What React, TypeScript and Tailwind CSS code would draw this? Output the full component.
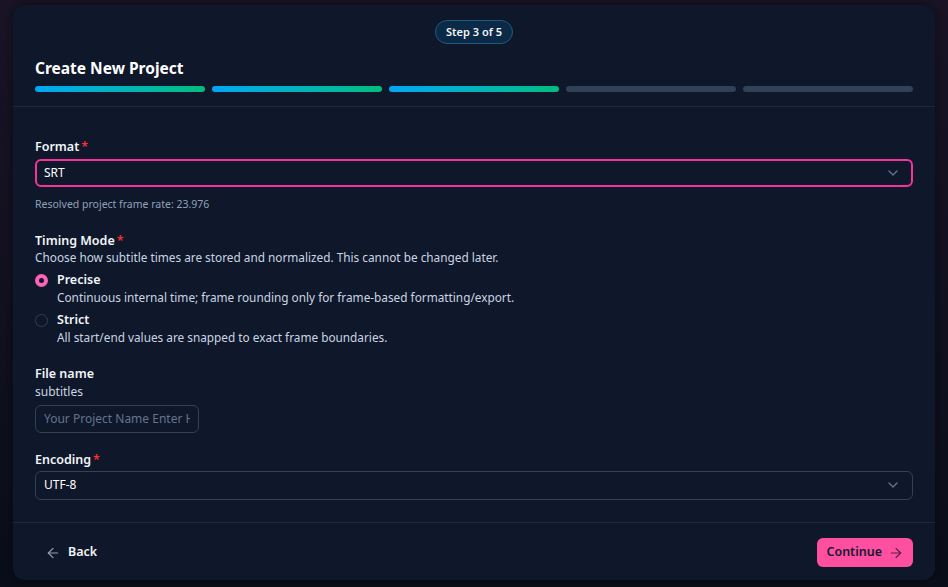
import { ArrowLeft, ArrowRight, ChevronDown } from "lucide-react"

const steps = [true, true, true, false, false]

function Label({ text, required }: { text: string; required?: boolean }) {
  return (
    <div className="text-[12.5px] font-semibold text-slate-100 leading-[17px]">
      {text}
      {required && <span className="ml-0.5 text-red-500">*</span>}
    </div>
  )
}

function Select({ value, active }: { value: string; active?: boolean }) {
  return (
    <div
      className={
        active
          ? "mt-[4px] flex h-[28px] items-center justify-between rounded-md border-2 border-pink-500 bg-[#0f172a] pl-[7px] pr-[10px]"
          : "mt-[3px] flex h-[29px] items-center justify-between rounded-md border border-slate-700 bg-[#0f172a] pl-[8px] pr-[11px]"
      }
    >
      <span className="text-[12px] text-white">{value}</span>
      <ChevronDown className="h-4 w-4 text-slate-500" strokeWidth={2} />
    </div>
  )
}

function Radio({ checked, title, desc }: { checked?: boolean; title: string; desc: string }) {
  return (
    <div className="flex gap-[9px]">
      <div
        className={
          checked
            ? "mt-[3px] h-[13px] w-[13px] shrink-0 rounded-full border-[4px] border-pink-400 bg-[#0f172a]"
            : "mt-[3px] h-[13px] w-[13px] shrink-0 rounded-full border border-slate-700 bg-[#0f172a]"
        }
      />
      <div>
        <div className="text-[12.5px] font-semibold leading-[18px] text-slate-100">{title}</div>
        <div className="text-[11.8px] leading-[17px] text-slate-300">{desc}</div>
      </div>
    </div>
  )
}

export default function App() {
  return (
    <div
      className="h-[587px] w-[948px] overflow-hidden bg-gradient-to-b from-[#1a1426] to-[#0a0e1a] px-[13px] pt-[5px]"
      style={{ fontFamily: '"Noto Sans", "Open Sans", sans-serif' }}
    >
      <div className="flex h-[575px] flex-col rounded-xl bg-[#0f172a] shadow-[0_0_12px_rgba(0,0,0,0.5)]">
        <div className="border-b border-slate-800 px-[22px] pb-[14px] pt-[15px]">
          <div className="flex justify-center">
            <span className="rounded-full border border-[#1d5a82] bg-[#0c2a45] px-[10px] py-[3px] text-[11px] font-semibold leading-[16px] text-slate-100">
              Step 3 of 5
            </span>
          </div>
          <h1 className="mt-[13px] text-[15.5px] font-bold leading-[22px] text-white">Create New Project</h1>
          <div className="mt-[7px] flex gap-[7px]">
            {steps.map((done, i) => (
              <div
                key={i}
                className={
                  done
                    ? "h-[6px] flex-1 rounded-full bg-gradient-to-r from-sky-500 to-emerald-500"
                    : "h-[6px] flex-1 rounded-full bg-slate-700"
                }
              />
            ))}
          </div>
        </div>

        <div className="flex-1 px-[22px] pt-[31px]">
          <Label text="Format" required />
          <Select value="SRT" active />
          <div className="mt-[10px] text-[10.5px] text-slate-400">Resolved project frame rate: 23.976</div>

          <div className="mt-[19px]">
            <Label text="Timing Mode" required />
            <div className="text-[11.8px] leading-[17px] text-slate-300">
              Choose how subtitle times are stored and normalized. This cannot be changed later.
            </div>
            <div className="mt-[5px] flex flex-col gap-[5px]">
              <Radio
                checked
                title="Precise"
                desc="Continuous internal time; frame rounding only for frame-based formatting/export."
              />
              <Radio title="Strict" desc="All start/end values are snapped to exact frame boundaries." />
            </div>
          </div>

          <div className="mt-[19px]">
            <Label text="File name" />
            <div className="mt-[1px] text-[12px] leading-[18px] text-slate-300">subtitles</div>
            <input
              className="mt-[4px] h-[28px] w-[164px] rounded-md border border-slate-700 bg-[#0f172a] px-[8px] text-[12px] text-white outline-none placeholder:text-slate-500"
              placeholder="Your Project Name Enter Here"
            />
          </div>

          <div className="mt-[18px]">
            <Label text="Encoding" required />
            <Select value="UTF-8" />
          </div>
        </div>

        <div className="flex h-[58px] items-center justify-between border-t border-slate-800 px-[22px] pt-[2px]">
          <button className="flex items-center gap-[7px] px-[10px] py-[6px] text-[12.5px] font-semibold text-slate-100">
            <ArrowLeft className="h-4 w-4 text-slate-400" strokeWidth={1.75} />
            Back
          </button>
          <button className="flex h-[29px] items-center gap-[6px] rounded-md bg-[#ff4fa0] px-[9px] text-[12.5px] font-semibold text-[#131a33]">
            Continue
            <ArrowRight className="h-4 w-4 text-[#5a1f45]" strokeWidth={1.75} />
          </button>
        </div>
      </div>
    </div>
  )
}
